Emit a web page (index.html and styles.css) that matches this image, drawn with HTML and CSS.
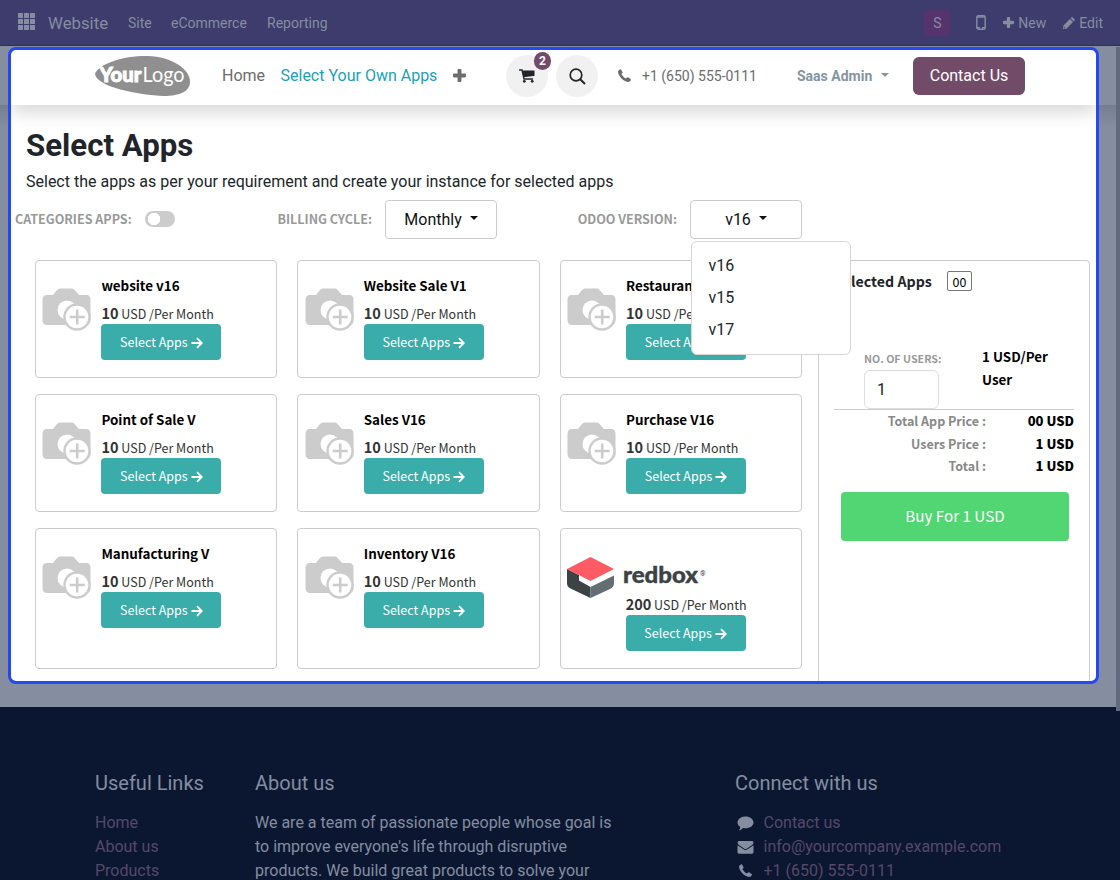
FILE: index.html
```html
<!DOCTYPE html>
<html lang="en">
<head>
<meta charset="utf-8">
<title>Select Apps</title>
<link rel="stylesheet" href="styles.css">
</head>
<body>
<svg class="defs" width="0" height="0">
  <symbol id="phone" viewBox="0 0 12 12"><path d="M0.3 1.500 L1.900 .3 C2.400 0 2.700 .2 3 .7 L4.200 2.900 C4.400 3.400 4.200 3.700 3.700 4.100 C3.200 4.400 3.200 4.700 3.500 5.200 C4.400 6.600 5.600 7.800 6.900 8.500 C7.400 8.700 7.600 8.600 7.900 8.200 C8.400 7.500 8.700 7.500 9.200 7.700 L11.400 8.900 C11.900 9.200 12 9.500 11.800 10.100 C11.400 11.500 10.300 12 9.100 11.900 C5 11.300 .6 6.900 .1 3.200 C0 2.500 0 2 .3 1.500Z" fill="currentColor"/></symbol>
  <symbol id="plus" viewBox="0 0 12 12"><path d="M4.200 1 Q4.200 0 5.200 0H6.800Q7.800 0 7.800 1V4.200H11Q12 4.200 12 5.200V6.800Q12 7.800 11 7.800H7.800V11Q7.800 12 6.800 12H5.200Q4.200 12 4.200 11V7.800H1Q0 7.800 0 6.800V5.200Q0 4.200 1 4.200H4.200Z" fill="currentColor"/></symbol>
  <symbol id="camera" viewBox="0 0 49 43"><path d="M14.500 2.500Q16.500 .5 18 .5H30Q31.500 .5 33 2.500L37 7H44Q48.500 7 48.500 12V32Q48.500 37 44 37H5Q.5 37 .5 32V12Q.5 7 5 7H11Z" fill="#ccc"/><circle cx="25" cy="22" r="9.500" fill="#fff"/><circle cx="35" cy="29" r="13.700" fill="#ccc"/><circle cx="35" cy="29" r="11.300" fill="#fff"/><path d="M27.700 29H42.700M35.200 21.500V36.500" stroke="#ccc" stroke-width="2.600"/></symbol>
  <symbol id="arrow" viewBox="0 0 12 12"><path d="M.5 6H10.800M6 1.200L10.800 6L6 10.800" stroke="#fff" stroke-width="1.800" fill="none"/></symbol>
</svg>
<header class="topbar">
  <svg class="grid-icon" width="17" height="17" viewBox="0 0 17 17"><path d="M0 0h5v5H0zM6 0h5v5H6zM12 0h5v5h-5zM0 6h5v5H0zM6 6h5v5H6zM12 6h5v5h-5zM0 12h5v5H0zM6 12h5v5H6zM12 12h5v5h-5z" fill="currentColor"/></svg>
  <span class="brand">Website</span>
  <span class="menu site">Site</span><span class="menu ecom">eCommerce</span><span class="menu">Reporting</span>
  <div class="tools">
    <span class="avatar">S</span>
    <svg class="mobile" width="10" height="15" viewBox="0 0 10 15"><rect x=".8" y=".8" width="8.400" height="13.400" rx="1.500" fill="none" stroke="currentColor" stroke-width="1.400"/><path d="M1 2H9M1 12.700H4M6 12.700H9" stroke="currentColor" stroke-width="1.500"/></svg>
    <svg class="t-plus" width="11" height="11"><use href="#plus"/></svg><span class="new">New</span>
    <svg class="pencil" width="12" height="12" viewBox="0 0 12 12"><path d="M0 12V8.900L6.900 2L10 5.100L3.100 12ZM7.600 1.300L8.600.3Q9.100 0 9.600.3L11.700 2.400Q12 2.900 11.700 3.400L10.700 4.400Z" fill="currentColor"/><path d="M1 9.400V11H2.600" fill="none" stroke="#3d3c6c" stroke-width=".7"/></svg><span>Edit</span>
  </div>
</header>
<main class="stage">
  <section class="frame">
    <nav class="nav">
      <svg class="logo" width="96" height="40" viewBox="0 0 96 40"><path d="M0 18C2 10 22 1 47 0C74-1 95 12 95 26C95 35 85 40 69 40C43 39 2 31 0 18Z" fill="#8f8f8f"/><text x="4.500" y="26" class="logo-your" textLength="42" lengthAdjust="spacingAndGlyphs">Your</text><text x="47.500" y="26" class="logo-logo" textLength="42" lengthAdjust="spacingAndGlyphs">Logo</text></svg>
      <span class="home">Home</span><span class="own">Select Your Own Apps</span>
      <svg class="n-plus" width="13" height="13"><use href="#plus"/></svg>
      <div class="circle cart"><svg width="16" height="14" viewBox="0 0 16 14"><path d="M.5 1H3L5 10H13.500" fill="none" stroke="#212529" stroke-width="1.400" stroke-linecap="round"/><path d="M3.200 1.500H15.500V6.200Q15.500 7 14.700 7.100L4.600 8.300Z" fill="#212529"/><circle cx="5.300" cy="12.300" r="1.400" fill="#212529"/><circle cx="13.200" cy="12.300" r="1.400" fill="#212529"/></svg><b class="badge">2</b></div>
      <div class="circle"><svg width="17" height="17" viewBox="0 0 17 17"><circle cx="7" cy="7" r="5.800" fill="none" stroke="#212529" stroke-width="1.700"/><path d="M11.200 11.200L16 16" stroke="#212529" stroke-width="2"/></svg></div>
      <svg class="n-phone" width="13" height="13"><use href="#phone"/></svg><span class="tel">+1 (650) 555-0111</span>
      <span class="admin">Saas Admin</span><i class="caret grey"></i>
      <a class="contact">Contact Us</a>
    </nav>
    <div class="content">
      <h1>Select Apps</h1>
      <p class="lead">Select the apps as per your requirement and create your instance for selected apps</p>
      <div class="filters">
        <span class="label cat">CATEGORIES APPS:</span><span class="switch"></span>
        <span class="label bill">BILLING CYCLE:</span><div class="select month">Monthly<i class="caret"></i></div>
        <span class="label ver">ODOO VERSION:</span>
        <div class="select version">v16<i class="caret"></i><div class="dropdown"><span>v16</span><span>v15</span><span>v17</span></div></div>
      </div>
      <div class="columns">
        <div class="cards">
          <article class="card"><svg class="cam"><use href="#camera"/></svg><div class="info"><h3>website v16</h3><p><b>10</b> USD /Per Month</p><a class="btn">Select Apps<svg><use href="#arrow"/></svg></a></div></article>
          <article class="card"><svg class="cam"><use href="#camera"/></svg><div class="info"><h3>Website Sale V1</h3><p><b>10</b> USD /Per Month</p><a class="btn">Select Apps<svg><use href="#arrow"/></svg></a></div></article>
          <article class="card"><svg class="cam"><use href="#camera"/></svg><div class="info"><h3>Restaurant V1</h3><p><b>10</b> USD /Per Month</p><a class="btn">Select Apps<svg><use href="#arrow"/></svg></a></div></article>
          <article class="card"><svg class="cam"><use href="#camera"/></svg><div class="info"><h3>Point of Sale V</h3><p><b>10</b> USD /Per Month</p><a class="btn">Select Apps<svg><use href="#arrow"/></svg></a></div></article>
          <article class="card"><svg class="cam"><use href="#camera"/></svg><div class="info"><h3>Sales V16</h3><p><b>10</b> USD /Per Month</p><a class="btn">Select Apps<svg><use href="#arrow"/></svg></a></div></article>
          <article class="card"><svg class="cam"><use href="#camera"/></svg><div class="info"><h3>Purchase V16</h3><p><b>10</b> USD /Per Month</p><a class="btn">Select Apps<svg><use href="#arrow"/></svg></a></div></article>
          <article class="card"><svg class="cam"><use href="#camera"/></svg><div class="info"><h3>Manufacturing V</h3><p><b>10</b> USD /Per Month</p><a class="btn">Select Apps<svg><use href="#arrow"/></svg></a></div></article>
          <article class="card"><svg class="cam"><use href="#camera"/></svg><div class="info"><h3>Inventory V16</h3><p><b>10</b> USD /Per Month</p><a class="btn">Select Apps<svg><use href="#arrow"/></svg></a></div></article>
          <article class="card redbox">
            <svg class="redlogo" width="140" height="42" viewBox="0 0 140 42"><path d="M0 12L12 18V23.500L23.500 30V41L3.500 31.500Q0 30 0 26Z" fill="#3d4244"/><path d="M23.500 30L47 18.500V26Q47 30 43 32L23.500 41Z" fill="#636d72"/><path d="M23.500 0L47 12L23.500 24L0 12Z" fill="#ff5b64"/><text x="56" y="25.500" class="redtext" textLength="75" lengthAdjust="spacingAndGlyphs">redbox</text><text x="133" y="19" class="reg">®</text></svg>
            <div class="info"><p><b>200</b> USD /Per Month</p><a class="btn">Select Apps<svg><use href="#arrow"/></svg></a></div></article>
        </div>
        <aside class="summary">
          <div class="sum-head"><b>Selected Apps</b><span class="count">00</span></div>
          <div class="users"><div><span class="users-label">NO. OF USERS:</span><div class="users-input">1</div></div><b class="per">1 USD/Per<br>User</b></div>
          <div class="totals">
            <div><span>Total App Price :</span><b>00 USD</b></div>
            <div><span>Users Price :</span><b>1 USD</b></div>
            <div><span>Total :</span><b>1 USD</b></div>
          </div>
          <a class="buy">Buy For 1 USD</a>
        </aside>
      </div>
    </div>
  </section>
  <div class="scroll"></div>
</main>
<footer class="footer">
  <section class="links"><h5>Useful Links</h5><a>Home</a><a>About us</a><a>Products</a></section>
  <section class="about"><h5>About us</h5><p>We are a team of passionate people whose goal is<br>to improve everyone's life through disruptive<br>products. We build great products to solve your</p></section>
  <section class="connect"><h5>Connect with us</h5>
    <div><svg width="17" height="15" viewBox="0 0 17 15"><path d="M8.500 .5C13 .5 16.500 3.200 16.500 6.500S13 12.300 8.500 12.300Q7 12.300 6 12Q4.200 14 1.800 14.500Q3.200 13 3.300 10.900C1.500 10 .5 8.300 .5 6.500C.5 3.200 4 .5 8.500 .5Z" fill="#858da0"/></svg><a>Contact us</a></div>
    <div><svg width="17" height="15" viewBox="0 0 17 15"><path d="M.5 2.500Q.5 1 2 1H15Q16.500 1 16.500 2.500Q16.500 4 14.800 5.200L10 8.500Q8.500 9.500 7 8.500L2.200 5.200Q.5 4 .5 2.500ZM.5 5.200L6.500 9.300Q8.500 10.600 10.500 9.300L16.500 5.200V12Q16.500 13.700 15 13.700H2Q.5 13.700 .5 12Z" fill="#858da0"/></svg><a>info@yourcompany.example.com</a></div>
    <div><svg class="f-phone" width="13" height="13"><use href="#phone"/></svg><a>+1 (650) 555-0111</a></div>
  </section>
</footer>
</body>
</html>
```
FILE: styles.css
```css
* { box-sizing: border-box; }
body { margin: 0; width: 1120px; height: 880px; overflow: hidden; background: #0b1730; font: 16px/24px Roboto, sans-serif; color: #212529; }
h1, h3, h5, p { margin: 0; }
svg { display: block; flex: none; }
.defs { position: absolute; }
span, a, b { white-space: nowrap; }

.topbar { height: 46px; background: #3d3c6c; border-bottom: 1px solid #2f305a; color: #858da0; display: flex; align-items: center; padding: 0 17px 0 18px; font-size: 14px; }
.grid-icon { margin-top: -2px; }
.brand { font-size: 16.800px; width: 80px; margin-left: 13px; }
.site { width: 43px; }
.ecom { width: 96px; }
.tools { margin-left: auto; display: flex; align-items: center; }
.avatar { width: 26px; height: 26px; border-radius: 3px; background: #56336d; text-align: center; line-height: 27px; margin-right: 26px; }
.mobile { margin-right: 17px; }
.t-plus { margin-right: 4px; }
.new { width: 45px; }
.pencil { margin-right: 4px; }

.stage { height: 661px; padding: 1px 0 0 8px; position: relative; background: linear-gradient(#757d91, #858da0) 0 59px / 100% 22px no-repeat, #858da0; }
.frame { width: 1091px; height: 637px; border: 3px solid #2249f3; border-radius: 8px; background: #fff; overflow: hidden; }
.scroll { position: absolute; right: 0; top: 1px; width: 4px; height: 664px; background: #626980; }

.nav { height: 55px; padding: 0 0 3px 84px; display: flex; align-items: center; color: #6c6c6c; position: relative; box-shadow: 0 8px 16px rgba(0,0,0,.15); }
.logo { margin-right: 31px; }
.logo-your { font: 900 20px Lato, sans-serif; fill: #fff; stroke: #fff; stroke-width: .9px; }
.logo-logo { font: 400 21px Lato, sans-serif; fill: #fff; }
.home { width: 58.500px; }
.own { width: 172.500px; color: #1ba1b7; }
.n-plus { margin: -2px 40px 0 0; }
.circle { flex: none; width: 42px; height: 42px; border-radius: 50%; background: #f1f1f1; display: flex; align-items: center; justify-content: center; position: relative; }
.cart { margin-right: 8px; }
.badge { position: absolute; left: 28px; top: -3px; width: 17px; height: 18px; border-radius: 9px; background: #714b67; color: #fff; font-size: 12px; line-height: 18px; text-align: center; }
.n-phone { margin: -2px 11px 0 20px; }
.tel { width: 155px; font-size: 14px; }
.admin { width: 84px; font-size: 14px; font-weight: 700; color: #8595a2; }
.caret { display: inline-block; flex: none; border: 4px solid transparent; border-top-color: #111; border-bottom: 0; }
.caret.grey { border-top-color: #8595a2; margin-top: -2px; }
.contact { margin-left: 24px; width: 112px; height: 38px; border-radius: 6px; background: #714b67; color: #fff; text-align: center; line-height: 38px; }

.content { padding: 21px 0 0 4px; }
h1 { font-size: 31.200px; line-height: 40px; padding-left: 11px; }
.lead { padding: 4px 0 0 11px; }
.filters { height: 39px; margin-top: 6px; display: flex; align-items: center; }
.label { font: 700 12.500px/20px "Noto Sans CJK SC", sans-serif; color: #999; margin-top: -1px; }
.cat { width: 130px; }
.switch { width: 30px; height: 16px; margin-top: -1px; border-radius: 8px; background: radial-gradient(circle at 9px 8px, #fff 6px, #ccc 6.500px); }
.bill { width: 110px; margin-left: 100px; text-align: right; padding-right: 13px; }
.select { width: 112px; height: 39px; border: 1px solid #ccc; border-radius: 4px; display: flex; align-items: center; justify-content: center; gap: 8px; color: #111; position: relative; }
.ver { width: 193px; text-align: right; padding-right: 13px; }
.select .caret { margin-top: -3px; }
.dropdown { position: absolute; z-index: 5; left: 0; top: 40px; width: 160px; height: 114px; background: #fff; border: 1px solid #d6d6d6; border-radius: 6px; padding: 8px 16.500px; display: flex; flex-direction: column; line-height: 32px; color: #212529; }

.columns { display: flex; margin-top: 21px; padding-left: 20px; }
.cards { width: 767px; display: grid; grid-template-columns: repeat(3, 1fr); grid-template-rows: 118px 118px 141px; gap: 16px 20px; }
.card { border: 1px solid #ccc; border-radius: 4px; display: flex; padding: 0 0 0 6.400px; font-family: "Noto Sans CJK SC", sans-serif; }
.cam { width: 49px; height: 43px; margin: 27px 10px 0 0; }
.info { padding-top: 13px; }
.card h3 { font-size: 13.400px; line-height: 22px; color: #000; }
.card p { font-size: 12.500px; line-height: 22px; height: 22px; margin-top: 7px; color: #333; white-space: nowrap; }
.card p b { font-size: 14.500px; line-height: 20px; }
.btn { width: 120px; height: 36px; background: #3aadaa; border-radius: 4px; color: #fff; font-size: 12.500px; display: flex; align-items: center; justify-content: center; gap: 3px; margin-top: -1px; }
.btn svg { width: 12px; height: 12px; margin-top: 2px; }
.redbox { flex-direction: column; }
.redbox .redlogo { margin-top: 28px; }
.redbox .info { padding: 0 0 0 58.600px; margin-top: -12px; }
.redtext { font: 900 22px Lato, sans-serif; fill: #3d4244; stroke: #3d4244; stroke-width: .4px; }
.reg { font: 7px Roboto, sans-serif; fill: #3d4244; }

.summary { width: 272px; height: 424px; margin-left: 16px; border: 1px solid #ccc; border-radius: 4px; font-family: "Noto Sans CJK SC", sans-serif; padding: 10px 15px; flex: none; }
.sum-head { display: flex; align-items: center; justify-content: space-between; width: 138px; height: 20px; font-size: 14.200px; }
.count { border: 1px solid #777; border-radius: 2px; width: 25px; height: 20px; font-size: 12.400px; line-height: 20px; text-align: center; color: #000; flex: none; }
.sum-head b { margin-right: 15px; }
.users { height: 119px; padding: 58px 0 0 30px; display: flex; border-bottom: 1px solid #ccc; }
.users-label { display: block; width: 76px; font-size: 10.700px; font-weight: 700; line-height: 20px; color: #999; height: 21px; }
.users-input { width: 75px; height: 39px; border: 1px solid #ddd; border-radius: 6px; padding-left: 12px; font: 16px/37px Roboto, sans-serif; }
.per { margin: -4px 0 0 42px; font-size: 13.400px; line-height: 23px; color: #000; }
.totals { font-size: 12.500px; font-weight: 700; margin-top: -1px; }
.totals div { display: flex; justify-content: space-between; height: 22.500px; line-height: 23px; }
.totals span { width: 152px; text-align: right; color: #888; }
.totals b { color: #000; font-size: 13px; }
.buy { display: block; margin: 15px 5px 0 7px; height: 49px; border-radius: 4px; background: #52d573; color: #fff; text-align: center; font-size: 15.200px; line-height: 47px; }

.footer { height: 173px; padding: 64px 0 0 95px; display: flex; color: #858da0; }
.footer h5 { font-size: 20px; line-height: 24px; font-weight: 400; margin-bottom: 16px; }
.footer a { color: #57476c; display: block; }
.links { width: 160px; }
.about { width: 480px; }
.connect div { display: flex; align-items: center; height: 24px; padding-left: 2px; }
.connect a { margin-left: 9.500px; }
.connect .f-phone { margin: -2px 2px 0 2px; }
```
